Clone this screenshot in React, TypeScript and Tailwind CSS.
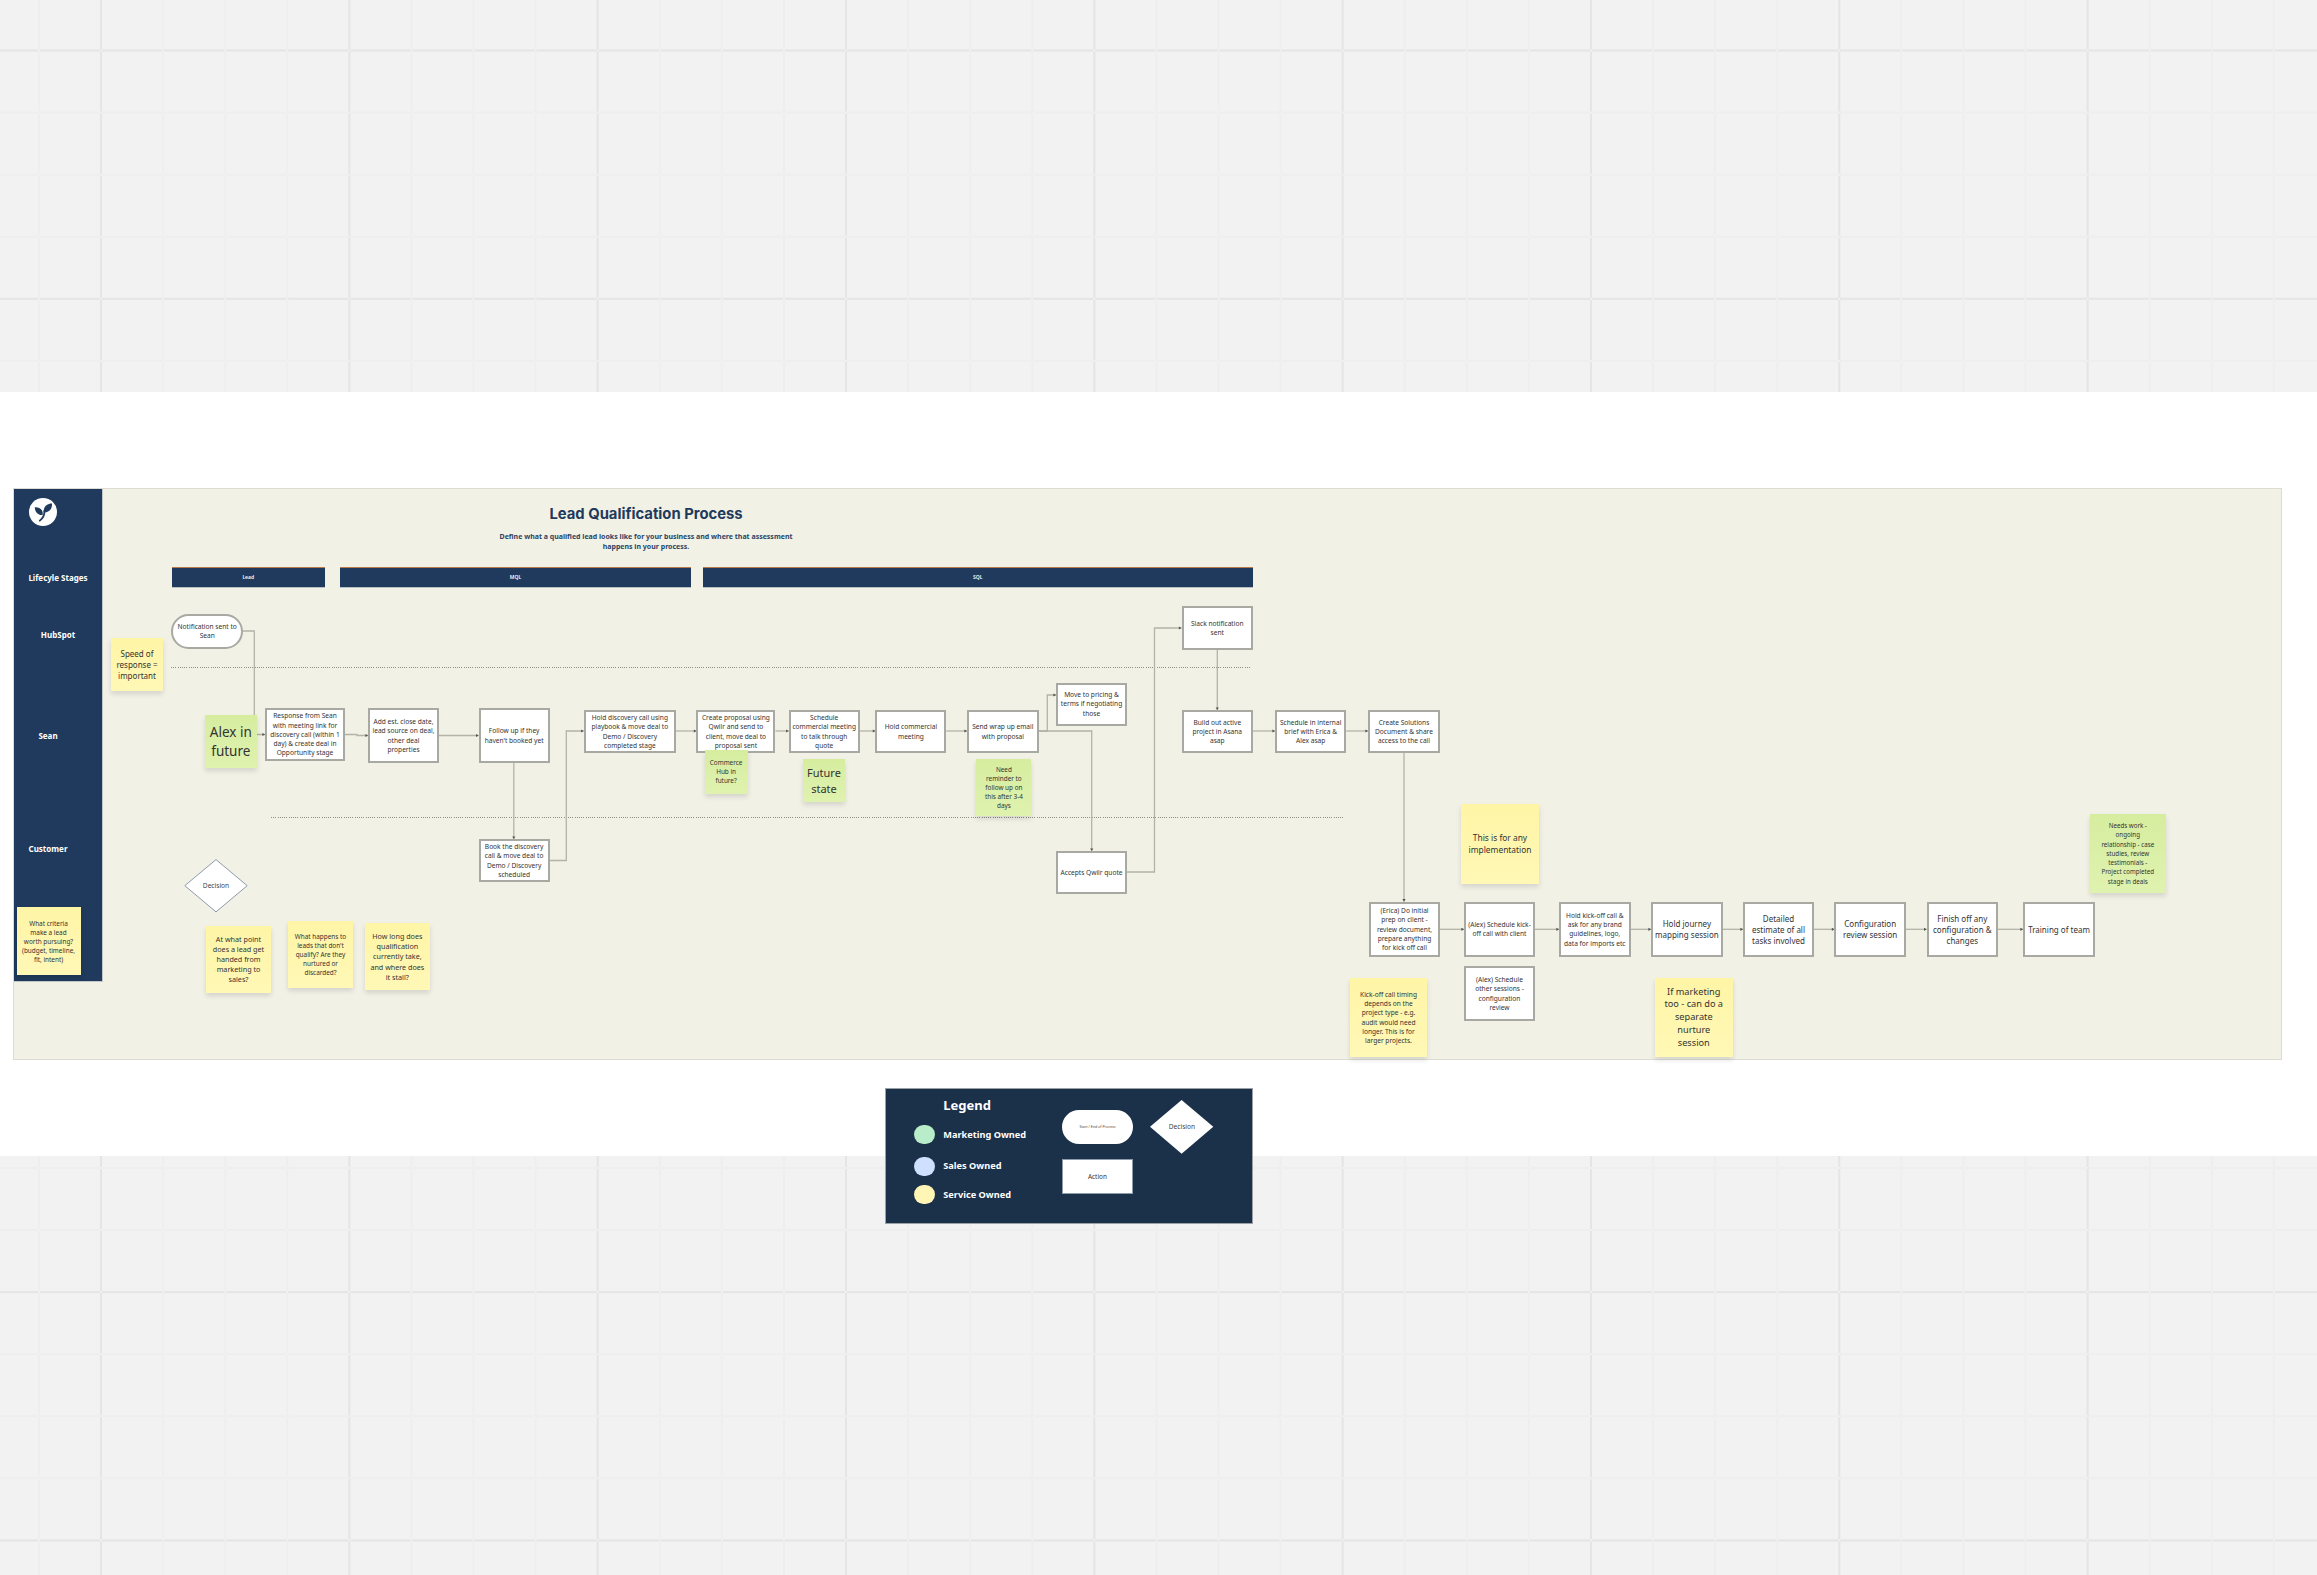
import React from "react";

type P = [number, number];
const connectors: P[][] = [
  [[243, 631], [254.3, 631], [254.3, 734.5], [265, 734.5]],
  [[345, 734.5], [357, 734.5], [357, 735.5], [368, 735.5]],
  [[439, 735.5], [478.6, 735.5]],
  [[513.8, 763], [513.8, 839]],
  [[549.5, 860.5], [566.3, 860.5], [566.3, 731], [583.7, 731]],
  [[676, 731], [696.4, 731]],
  [[775.5, 731], [788.7, 731]],
  [[859.6, 731], [875.4, 731]],
  [[946.3, 731], [967, 731]],
  [[1038.7, 731], [1047.3, 731], [1047.3, 695], [1056, 695]],
  [[1038.7, 731], [1091.7, 731], [1091.7, 851]],
  [[1127, 872], [1154.5, 872], [1154.5, 628], [1181.5, 628]],
  [[1217.3, 649.7], [1217.3, 710]],
  [[1253, 731], [1275, 731]],
  [[1346.3, 731], [1368, 731]],
  [[1404, 753], [1404, 901.7]],
  [[1440, 929.3], [1464, 929.3]],
  [[1535, 929.3], [1559, 929.3]],
  [[1630.5, 929.3], [1651, 929.3]],
  [[1722.7, 929.3], [1743, 929.3]],
  [[1814, 929.3], [1834.4, 929.3]],
  [[1906, 929.3], [1926.6, 929.3]],
  [[1998, 929.3], [2023, 929.3]],
];

function Arrow({ pts }: { pts: P[] }) {
  const [a, b] = pts.slice(-2);
  const dx = Math.sign(b[0] - a[0]);
  const dy = Math.sign(b[1] - a[1]);
  const s = 2.6;
  const tip = `${b[0]},${b[1]}`;
  const l = `${b[0] - dx * s - dy * 1.6},${b[1] - dy * s - dx * 1.6}`;
  const r = `${b[0] - dx * s + dy * 1.6},${b[1] - dy * s + dx * 1.6}`;
  return (
    <g>
      <polyline points={pts.map((p) => p.join(",")).join(" ")} fill="none" stroke="#b3b3a8" strokeWidth="1.3" />
      <polygon points={`${tip} ${l} ${r}`} fill="#55554f" />
    </g>
  );
}

function Box({ className, lines }: { className: string; lines: string[] }) {
  return (
    <div className={"absolute flex flex-col items-center justify-center bg-white border-2 border-[#a9a9a4] text-[#333] whitespace-nowrap text-center " + className}>
      {lines.map((l) => (
        <span key={l}>{l}</span>
      ))}
    </div>
  );
}

function Sticky({ className, lines, green, flow }: { className: string; lines: string[]; green?: boolean; flow?: boolean }) {
  return (
    <div
      className={
        (flow ? "" : "absolute ") +
        "flex flex-col items-center justify-center text-[#333] whitespace-nowrap text-center shadow-[0_3px_5px_rgba(0,0,0,0.12)] bg-linear-to-b " +
        (green ? "from-[#d6ed9f] to-[#dff2af] " : "from-[#fff5a6] to-[#fff8b6] ") +
        className
      }
    >
      {lines.map((l) => (
        <span key={l}>{l}</span>
      ))}
    </div>
  );
}

function Stage({ className, label }: { className: string; label: string }) {
  return (
    <div className={"flex items-center justify-center h-[21.5px] bg-[#1f3a5c] border-t border-t-[#b5794a] border-b border-b-[#b8bfc4] text-[5px] font-semibold text-white " + className}>
      {label}
    </div>
  );
}

function LegendRow({ color, label, className }: { color: string; label: string; className: string }) {
  return (
    <div className={"flex items-center gap-[8.3px] " + className}>
      <div className={"w-[20.7px] h-[19px] rounded-full " + color} />
      <div className="text-[9.2px] font-bold whitespace-nowrap">{label}</div>
    </div>
  );
}

const small = "text-[6.6px] leading-[9.3px]";
const laneLabel = "text-[8px] leading-[12px] font-bold text-white whitespace-nowrap";
const dots = "absolute h-[1px] bg-[repeating-linear-gradient(to_right,#8f8f84_0_1px,transparent_1px_2.2px)]";

export default function App() {
  return (
    <div className="relative w-[2317px] h-[1575px] overflow-hidden font-['Noto_Sans',sans-serif] bg-[#f2f2f2] bg-[image:radial-gradient(circle_at_1px_1px,#f1f1f1_1.3px,transparent_1.4px),linear-gradient(to_right,#e5e5e5_2px,transparent_2px),linear-gradient(to_bottom,#e5e5e5_2px,transparent_2px),linear-gradient(to_right,#eeeeee_2px,transparent_2px),linear-gradient(to_bottom,#eeeeee_2px,transparent_2px)] bg-[size:62.08px_62.08px,248.33px_248.33px,248.33px_248.33px,62.08px_62.08px,62.08px_62.08px] bg-[position:38px_49.5px,100px_0px,0px_49.5px,38px_0px,0px_49.5px]">
      <div className="h-[392px]" />
      <div className="h-[764px] bg-white" />

      {/* Frame */}
      <div className="absolute left-[13px] top-[488px] w-[2269px] h-[572px] flex items-start bg-[#f1f1e6] border-[1.5px] border-[#dcdcd4]">
        <div className="w-[89px] h-[493px] shrink-0 flex flex-col items-center pt-[9px] bg-[#1f3a5c] border-r border-b border-[#c3c6c6]">
          <svg className="w-[28px] h-[28px] mr-[31px]" viewBox="0 0 28 28">
            <circle cx="14" cy="14" r="14" fill="#fff" />
            <path d="M5.8 9.2C5.8 13.8 9 17.6 13.6 17C14.6 12.6 11 8.6 5.8 9.2Z" fill="#1f3a5c" />
            <path d="M23 5.6C18 5.6 14 8.8 14.8 14.6C19.8 14.8 23.4 11 23 5.6Z" fill="#1f3a5c" />
            <path d="M15.4 13C15.6 16.8 14.2 20 10.8 22.6" fill="none" stroke="#1f3a5c" strokeWidth="1.8" strokeLinecap="round" />
          </svg>
          <div className={"mt-[46px] " + laneLabel}>Lifecyle Stages</div>
          <div className={"mt-[45px] " + laneLabel}>HubSpot</div>
          <div className={"mt-[89px] mr-[20px] " + laneLabel}>Sean</div>
          <div className={"mt-[101px] mr-[20px] " + laneLabel}>Customer</div>
          <Sticky flow className="mt-[52px] mr-[19px] w-[64px] h-[68px] shrink-0 text-[6.4px] leading-[9px]" lines={["What criteria", "make a lead", "worth pursuing?", "(budget, timeline,", "fit, intent)"]} />
        </div>
        <div className="pl-[68.5px] pt-[15px] flex flex-col">
          <div className="ml-[324.5px] w-[300px] flex flex-col items-center whitespace-nowrap">
            <div className="text-[14.8px] leading-[21px] font-bold font-['Inter',sans-serif] text-[#1f3a5c]">Lead Qualification Process</div>
            <div className="mt-[6.5px] flex flex-col items-center text-[7px] leading-[10px] font-bold text-[#2c4463]">
              <div>Define what a qualified lead looks like for your business and where that assessment</div>
              <div>happens in your process.</div>
            </div>
          </div>
          <div className="mt-[15px] flex">
            <Stage className="w-[153.5px]" label="Lead" />
            <Stage className="ml-[15px] w-[351px]" label="MQL" />
            <Stage className="ml-[12px] w-[549.5px]" label="SQL" />
          </div>
        </div>
      </div>

      {/* Swimlane separators */}
      <div className={"left-[171px] top-[667px] w-[1079px] " + dots} />
      <div className={"left-[271px] top-[817px] w-[1072px] " + dots} />

      {/* Connectors */}
      <svg className="absolute left-0 top-0 w-[2317px] h-[1575px]" viewBox="0 0 2317 1575">
        {connectors.map((pts, i) => (
          <Arrow key={i} pts={pts} />
        ))}
      </svg>

      {/* Nodes */}
      <div className={"absolute left-[171.4px] top-[613.6px] w-[71.6px] h-[35.2px] flex flex-col items-center justify-center rounded-[18px] bg-white border-2 border-[#a9a9a4] text-[#333] whitespace-nowrap " + small}>
        <span>Notification sent to</span>
        <span>Sean</span>
      </div>
      <Box className={"left-[265px] top-[708px] w-[80px] h-[53px] " + small} lines={["Response from Sean", "with meeting link for", "discovery call (within 1", "day) & create deal in", "Opportunity stage"]} />
      <Box className={"left-[368px] top-[708px] w-[71px] h-[55px] " + small} lines={["Add est. close date,", "lead source on deal,", "other deal", "properties"]} />
      <Box className={"left-[478.6px] top-[708px] w-[71px] h-[55px] " + small} lines={["Follow up if they", "haven't booked yet"]} />
      <Box className={"left-[583.7px] top-[710px] w-[92.3px] h-[43px] " + small} lines={["Hold discovery call using", "playbook & move deal to", "Demo / Discovery", "completed stage"]} />
      <Box className={"left-[696.4px] top-[710px] w-[79.1px] h-[43px] " + small} lines={["Create proposal using", "Qwilr and send to", "client, move deal to", "proposal sent"]} />
      <Box className={"left-[788.7px] top-[710px] w-[71px] h-[43px] " + small} lines={["Schedule", "commercial meeting", "to talk through", "quote"]} />
      <Box className={"left-[875.4px] top-[710px] w-[71px] h-[43px] " + small} lines={["Hold commercial", "meeting"]} />
      <Box className={"left-[967px] top-[710px] w-[71.7px] h-[43px] " + small} lines={["Send wrap up email", "with proposal"]} />
      <Box className={"left-[1056px] top-[682.5px] w-[71px] h-[43px] " + small} lines={["Move to pricing &", "terms if negotiating", "those"]} />
      <Box className={"left-[1181.5px] top-[606.4px] w-[71.5px] h-[43.3px] " + small} lines={["Slack notification", "sent"]} />
      <Box className={"left-[1181.5px] top-[710px] w-[71.5px] h-[43px] " + small} lines={["Build out active", "project in Asana", "asap"]} />
      <Box className={"left-[1275px] top-[710px] w-[71.3px] h-[43px] " + small} lines={["Schedule in internal", "brief with Erica &", "Alex asap"]} />
      <Box className={"left-[1368px] top-[710px] w-[72px] h-[43px] " + small} lines={["Create Solutions", "Document & share", "access to the call"]} />
      <Box className={"left-[1056px] top-[851px] w-[71px] h-[43px] " + small} lines={["Accepts Qwilr quote"]} />
      <Box className={"left-[478.6px] top-[839px] w-[71px] h-[43px] " + small} lines={["Book the discovery", "call & move deal to", "Demo / Discovery", "scheduled"]} />

      <Box className={"left-[1369px] top-[901.7px] w-[71px] h-[55.3px] " + small} lines={["(Erica) Do initial", "prep on client -", "review document,", "prepare anything", "for kick off call"]} />
      <Box className={"left-[1464px] top-[901.7px] w-[71px] h-[55.3px] " + small} lines={["(Alex) Schedule kick-", "off call with client"]} />
      <Box className={"left-[1559px] top-[901.7px] w-[71.5px] h-[55.3px] " + small} lines={["Hold kick-off call &", "ask for any brand", "guidelines, logo,", "data for imports etc"]} />
      <Box className="left-[1651px] top-[901.7px] w-[71.7px] h-[55.3px] text-[8px] leading-[11px]" lines={["Hold journey", "mapping session"]} />
      <Box className="left-[1743px] top-[901.7px] w-[71px] h-[55.3px] text-[8px] leading-[11px]" lines={["Detailed", "estimate of all", "tasks involved"]} />
      <Box className="left-[1834.4px] top-[901.7px] w-[71.6px] h-[55.3px] text-[8px] leading-[11px]" lines={["Configuration", "review session"]} />
      <Box className="left-[1926.6px] top-[901.7px] w-[71.4px] h-[55.3px] text-[8px] leading-[11px]" lines={["Finish off any", "configuration &", "changes"]} />
      <Box className="left-[2023px] top-[901.7px] w-[72px] h-[55.3px] text-[8px] leading-[11px]" lines={["Training of team"]} />
      <Box className={"left-[1464px] top-[966px] w-[71px] h-[55px] " + small} lines={["(Alex) Schedule", "other sessions -", "configuration", "review"]} />

      {/* Decision */}
      <div className="absolute left-[184px] top-[859px] w-[64px] h-[53.5px] flex items-center justify-center text-[6.6px] text-[#444]">
        <svg className="absolute inset-0 w-[64px] h-[53.5px]" viewBox="0 0 64 53.5">
          <polygon points="32,0.6 63.2,26.7 32,52.9 0.8,26.7" fill="#fff" stroke="#8d9aab" strokeWidth="1" />
        </svg>
        <span className="relative">Decision</span>
      </div>

      {/* Stickies */}
      <Sticky className="left-[111px] top-[638px] w-[52px] h-[53px] text-[8px] leading-[11px]" lines={["Speed of", "response =", "important"]} />
      <Sticky green className="left-[205px] top-[715px] w-[51.6px] h-[53px] text-[13.5px] leading-[18.6px]" lines={["Alex in", "future"]} />
      <Sticky green className="left-[704.6px] top-[750px] w-[43px] h-[43.7px] text-[6.4px] leading-[9px]" lines={["Commerce", "Hub in", "future?"]} />
      <Sticky green className="left-[803px] top-[759px] w-[42px] h-[43px] text-[11px] leading-[15.5px]" lines={["Future", "state"]} />
      <Sticky green className="left-[976.4px] top-[759px] w-[55px] h-[57.4px] text-[6.4px] leading-[9px]" lines={["Need", "reminder to", "follow up on", "this after 3-4", "days"]} />
      <Sticky className="left-[206px] top-[925.7px] w-[65px] h-[67.3px] text-[7.2px] leading-[10.1px]" lines={["At what point", "does a lead get", "handed from", "marketing to", "sales?"]} />
      <Sticky className="left-[288px] top-[921px] w-[65px] h-[67px] text-[6.4px] leading-[9px]" lines={["What happens to", "leads that don't", "qualify? Are they", "nurtured or", "discarded?"]} />
      <Sticky className="left-[365px] top-[923px] w-[64.7px] h-[67px] text-[7.2px] leading-[10.1px]" lines={["How long does", "qualification", "currently take,", "and where does", "it stall?"]} />
      <Sticky className="left-[1461px] top-[804px] w-[78px] h-[80px] text-[8.4px] leading-[11.7px]" lines={["This is for any", "implementation"]} />
      <Sticky green className="left-[2089.6px] top-[814px] w-[76.4px] h-[79px] text-[6.2px] leading-[9.3px]" lines={["Needs work -", "ongoing", "relationship - case", "studies, review", "testimonials -", "Project completed", "stage in deals"]} />
      <Sticky className="left-[1350px] top-[978px] w-[77px] h-[79px] text-[6.6px] leading-[9.3px]" lines={["Kick-off call timing", "depends on the", "project type - e.g.", "audit would need", "longer. This is for", "larger projects."]} />
      <Sticky className="left-[1655px] top-[978px] w-[77.5px] h-[79px] text-[9.2px] leading-[12.7px]" lines={["If marketing", "too - can do a", "separate", "nurture", "session"]} />

      {/* Legend */}
      <div className="absolute left-[885.3px] top-[1088px] w-[367.4px] h-[136px] flex bg-[#1b3049] border border-[#9aa0a6] text-white">
        <div className="w-[176px] pl-[28px] pt-[7px] flex flex-col">
          <div className="ml-[29px] h-[18px] text-[13px] leading-[18px] font-bold">Legend</div>
          <LegendRow className="mt-[11px]" color="bg-[#b9edc9]" label="Marketing Owned" />
          <LegendRow className="mt-[12.7px]" color="bg-[#cfe0ff]" label="Sales Owned" />
          <LegendRow className="mt-[9.4px]" color="bg-[#fff6b6]" label="Service Owned" />
        </div>
        <div className="pt-[21px] flex flex-col gap-[15.3px]">
          <div className="w-[70.3px] h-[33.7px] rounded-[17px] bg-white text-[#444] text-[3.6px] flex items-center justify-center whitespace-nowrap">Start / End of Process</div>
          <div className="w-[70.3px] h-[34.7px] bg-white border border-[#8d9aab] text-[#333] text-[6.4px] flex items-center justify-center">Action</div>
        </div>
        <div className="relative ml-[17.7px] mt-[11px] w-[63.3px] h-[53.7px] flex items-center justify-center text-[6.6px] text-[#444]">
          <svg className="absolute inset-0 w-[63.3px] h-[53.7px]" viewBox="0 0 63.3 53.7">
            <polygon points="31.6,0 63.3,26.8 31.6,53.7 0,26.8" fill="#fff" />
          </svg>
          <span className="relative">Decision</span>
        </div>
      </div>
    </div>
  );
}
